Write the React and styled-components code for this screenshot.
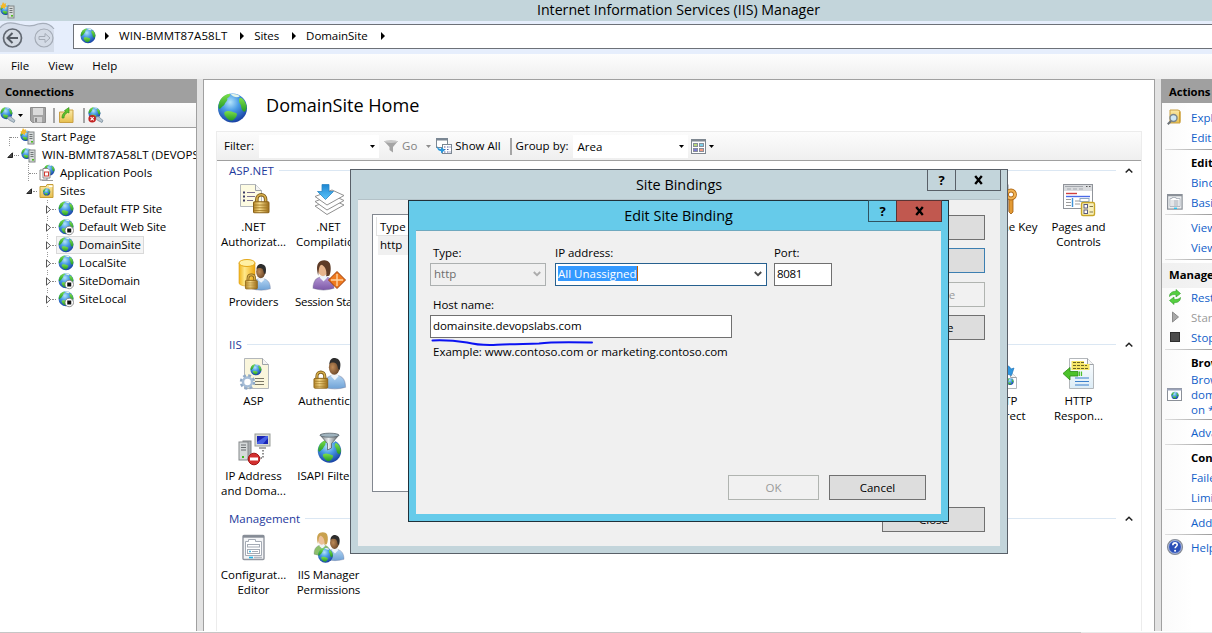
import React from "react";
import styled, { createGlobalStyle } from "styled-components";

const Global = createGlobalStyle`
  * { box-sizing: border-box; }
  html, body { margin: 0; padding: 0; overflow: hidden; }
  body {
    font-family: "Open Sans", "Noto Sans", sans-serif;
    font-size: 11.5px;
    line-height: 15px;
    color: #000;
    background: #fff;
  }
  svg { display: block; flex: none; overflow: visible; }
`;

/* ---------- icons ---------- */

const Svg = ({ w = 32, h = w, box = "0 0 32 32", children }) => (
  <svg width={w} height={h} viewBox={box} fill="none">{children}</svg>
);

const SharedGradients = () => (
  <defs>
    <radialGradient id="sea" cx="0.42" cy="0.3" r="0.75">
      <stop offset="0" stopColor="#b4e4fb" />
      <stop offset="0.4" stopColor="#4a9ce6" />
      <stop offset="1" stopColor="#12379c" />
    </radialGradient>
    <linearGradient id="land" x1="0" y1="0" x2="0" y2="1">
      <stop offset="0" stopColor="#7ee04a" />
      <stop offset="1" stopColor="#229a26" />
    </linearGradient>
    <linearGradient id="gold" x1="0" y1="0" x2="1" y2="0">
      <stop offset="0" stopColor="#b98a2a" />
      <stop offset="0.4" stopColor="#f7dc8c" />
      <stop offset="1" stopColor="#9a6a14" />
    </linearGradient>
    <linearGradient id="yellow" x1="0" y1="0" x2="1" y2="0">
      <stop offset="0" stopColor="#f0b41c" />
      <stop offset="0.35" stopColor="#ffe88a" />
      <stop offset="1" stopColor="#eea80c" />
    </linearGradient>
    <linearGradient id="folder" x1="0" y1="0" x2="0" y2="1">
      <stop offset="0" stopColor="#fbeaa8" />
      <stop offset="1" stopColor="#e6bf4e" />
    </linearGradient>
    <linearGradient id="steel" x1="0" y1="0" x2="1" y2="0">
      <stop offset="0" stopColor="#6e7478" />
      <stop offset="0.45" stopColor="#e8ecee" />
      <stop offset="1" stopColor="#4c5256" />
    </linearGradient>
    <linearGradient id="blueshirt" x1="0" y1="0" x2="0" y2="1">
      <stop offset="0" stopColor="#b4d6f4" />
      <stop offset="1" stopColor="#6fa2d6" />
    </linearGradient>
    <linearGradient id="sky" x1="0" y1="0" x2="0" y2="1">
      <stop offset="0" stopColor="#1d86d2" />
      <stop offset="1" stopColor="#5cc4fa" />
    </linearGradient>
    <linearGradient id="paper" x1="0" y1="0" x2="0" y2="1">
      <stop offset="0" stopColor="#fff" />
      <stop offset="1" stopColor="#dcecf6" />
    </linearGradient>
    <linearGradient id="purple" x1="0" y1="0" x2="0" y2="1">
      <stop offset="0" stopColor="#b79ad6" />
      <stop offset="1" stopColor="#7d58a8" />
    </linearGradient>
    <radialGradient id="darkface" cx="0.35" cy="0.5" r="0.7">
      <stop offset="0" stopColor="#bd8a58" />
      <stop offset="1" stopColor="#5e3d22" />
    </radialGradient>
  </defs>
);

const GlobeArt = ({ x = 0, y = 0, s = 1 }) => (
  <g transform={`translate(${x} ${y}) scale(${s})`}>
    <circle cx="16" cy="15.5" r="15" fill="url(#sea)" />
    <path d="M1.800 12C3 6 7 2 13 .9C14.500 2 13 4.500 10.500 5.500C11.500 8 8.500 9.500 7.500 12.500C5.500 13.500 4.500 16 2.600 16.500C1.400 15 1.400 13.500 1.800 12Z" fill="url(#land)" />
    <path d="M8 19.500C11 17.500 15 19 19 20.500C22.500 21 19.500 26.500 16.500 28C14 29.500 11 27.500 9 24.500C7.500 22.500 7 20.500 8 19.500Z" fill="url(#land)" />
    <path d="M24 5C27 5 30 10.500 30.600 14C30.600 17.500 29 20.500 27.500 19C24.500 17 25.500 13.500 24 11.500C22.500 9.500 22 6.500 24 5Z" fill="url(#land)" />
    <path d="M14 1.500C17 .3 21.500 1.300 23.500 3.300C21 5.500 17 4 14 1.500Z" fill="#e3f4e8" />
  </g>
);

const Globe = ({ size = 16 }) => <Svg w={size} box="0 0 32 32"><GlobeArt /></Svg>;

const StoppedGlobe = () => (
  <Svg w={16}>
    <GlobeArt />
    <circle cx="22.5" cy="23" r="8.5" fill="#fff" stroke="#777" strokeWidth="1.6" />
    <rect x="18.5" y="19" width="8" height="8" fill="#111" />
  </Svg>
);

const ServerArt = ({ x = 0, y = 0 }) => (
  <g transform={`translate(${x} ${y})`}>
    <rect x=".5" y=".5" width="6" height="12" fill="#d5d9d8" stroke="#84898a" />
    <path d="M2 3h3M2 5h3M2 7h3" stroke="#6f7576" />
    <rect x="3.5" y="9.5" width="2" height="1.6" fill="#4fbc1e" />
  </g>
);

const ServerGlobe = ({ star, defs }) => (
  <Svg w={16} box="0 0 16 16">
    {defs && <SharedGradients />}
    <GlobeArt s={0.36} x={0} y={1} />
    {star && <path d="M3 -1l1.200 1.800 2-.6-.6 2 1.600 1.200-2 .6-.2 2-1.800-1.200-2 .8.2-2L0 3l1.800-1Z" fill="#f5b82a" />}
    <ServerArt x={7.5} y={2.5} />
  </Svg>
);

const AppPoolsIcon = () => (
  <Svg w={16} box="0 0 16 16">
    <GlobeArt s={0.36} x={4.5} y={-0.5} />
    <path d="M1 5h7v10H1z" fill="#fff" stroke="#8a8a8a" />
    <path d="M4 3.500h5l2 2V13H4z" fill="#fff" stroke="#8a8a8a" />
    <rect x="5.500" y="7" width="4" height="4" fill="#fff" stroke="#d03a30" />
    <path d="M3 15.500h11" stroke="#9a9a9a" />
  </Svg>
);

const SitesFolder = () => (
  <Svg w={16} box="0 0 16 16">
    <path d="M1 3.500h6l1-2h6v13H1z" fill="url(#folder)" stroke="#c79d35" />
    <rect x="10" y="2.500" width="3.500" height="1.500" fill="#fff" />
    <GlobeArt s={0.24} x={3.8} y={5.2} />
  </Svg>
);

const ConnectIcon = ({ stop }) => (
  <Svg w={17} h={16} box="0 0 17 16">
    <GlobeArt s={0.4} />
    <path d="M7 11c1-1 3-2 4-1l4 3.500-1 2-4-2z" fill="#b8c6d0" stroke="#6e8494" strokeWidth=".7" />
    {stop && <circle cx="4.2" cy="11.8" r="3.8" fill="#c32020" />}
    {stop && <path d="M2.600 10.200l3.200 3.200M5.800 10.200l-3.200 3.200" stroke="#fff" strokeWidth="1.2" />}
  </Svg>
);

const SaveIcon = () => (
  <Svg w={16} box="0 0 16 16">
    <path d="M.5.5h15v15H2.500l-2-2z" fill="#a3a3a3" stroke="#8d8d8d" />
    <rect x="3" y="1" width="10" height="7" fill="#dadada" />
    <rect x="4" y="10" width="8" height="5.500" fill="#d0d0d0" />
    <rect x="5" y="11" width="2" height="4" fill="#8a8a8a" />
  </Svg>
);

const UpFolder = () => (
  <Svg w={15} h={16} box="0 0 15 16">
    <path d="M.5 5h7l1-2h5.500v12.500H.5z" fill="url(#folder)" stroke="#c9a044" />
    <path d="M3 11C3 8 4 6 6.500 5L5.500 3.500L10 .5V6L8.500 5.500C6.500 6.500 5 8.500 5 11Z" fill="#5cc42e" stroke="#2d8a14" strokeWidth=".6" />
  </Svg>
);

const Caret = ({ color = "#000" }) => (
  <Svg w={5} h={3} box="0 0 5 3"><path d="M0 0h5L2.500 3z" fill={color} /></Svg>
);

const CrumbArrow = () => (
  <Svg w={4} h={8} box="0 0 4 8"><path d="M0 0v8l4-4z" fill="#000" /></Svg>
);

const Chevron = () => (
  <Svg w={8} h={5} box="0 0 8 5"><path d="M.7 4.500L4 1.200l3.300 3.300" stroke="#222" strokeWidth="1.500" /></Svg>
);

const ComboArrow = ({ color }) => (
  <Svg w={8} h={6} box="0 0 8 6"><path d="M.8 1L4 4.200 7.200 1" stroke={color} strokeWidth="1.900" /></Svg>
);

const Funnel = () => (
  <Svg w={14} h={13} box="0 0 14 13">
    <path d="M0 1h14L9 7v5.500L5.500 10V7z" fill="#a4a4a4" />
    <ellipse cx="7" cy="1.500" rx="6.500" ry="1.500" fill="#c9c9c9" />
  </Svg>
);

const ShowAllIcon = () => (
  <Svg w={16} box="0 0 16 16">
    <rect x=".5" y=".5" width="11" height="9" fill="#fff" stroke="#7b8793" />
    <path d="M0 1.500h12" stroke="#7b8793" strokeWidth="2" />
    <rect x="6.500" y="6.500" width="9" height="9" fill="#fff" stroke="#7b8793" />
    <path d="M8 9h1.500M11 9h1.500M13.500 9h1M8 11.500h1.500M11 11.500h1.500M8 14h1.500M11 14h1.500M13.500 14h1" stroke="#555c9c" />
    <path d="M1 8c0 4 2 5 4 5v2.500l4-3.500-4-3V11c-2 0-3-1-4-3z" fill="#2b98dc" />
  </Svg>
);

const GridIcon = () => (
  <Svg w={15} box="0 0 15 15">
    <rect x=".5" y=".5" width="14" height="14" fill="#fff" stroke="#7f8790" />
    <path d="M0 1.500h15" stroke="#7f8790" strokeWidth="2" />
    <rect x="2.500" y="4.500" width="4" height="3" fill="#b8d878" stroke="#888e9a" />
    <rect x="8.500" y="4.500" width="4" height="3" fill="#7ed0e8" stroke="#888e9a" />
    <rect x="2.500" y="9.500" width="4" height="3" fill="#7c7ad4" stroke="#888e9a" />
    <rect x="8.500" y="9.500" width="4" height="3" fill="#f09a80" stroke="#888e9a" />
  </Svg>
);

const LockArt = ({ x, y, s = 1 }) => (
  <g transform={`translate(${x} ${y}) scale(${s})`}>
    <path d="M3.500 8V5.500C3.500-.3 11.500-.3 11.500 5.500V8" stroke="#7d5c1c" strokeWidth="3.200" />
    <path d="M3.500 8V5.500C3.500-.3 11.500-.3 11.500 5.500V8" stroke="#d8b04c" strokeWidth="1.500" />
    <rect x=".5" y="7.500" width="14" height="10" rx="1" fill="url(#gold)" stroke="#8c6318" />
    <path d="M1 10.500h13M1 13h13M1 15.500h13" stroke="#a37a26" strokeWidth=".8" />
  </g>
);

const PersonArt = ({ x, y, s = 1, hair = "#2d2d2d", shirt = "url(#blueshirt)", face = "url(#darkface)", long }) => (
  <g transform={`translate(${x} ${y}) scale(${s})`}>
    <path d="M0 27C0 19 4 16 10 15.500C16 16 20 19 20 27C14 29 6 29 0 27Z" fill={shirt} stroke="#6a6a8a" strokeOpacity=".35" />
    <path d="M7.500 14h5l1 3-3.500 3.500L6.500 17z" fill="#eef4fa" />
    <ellipse cx="9.500" cy="8.500" rx="5" ry="7" fill={face} />
    <path
      d={long ? "M5 15C4 11 3 6 5 3C7 -.5 14 -1 16 3C17.500 7 17 12 15.500 15L12.500 15.500C13.500 11 12 6.500 8.500 4.500C6.500 4.500 5.500 7 5 15Z" : "M5 6C5 1 8-.3 11 .2C15.500 1 16 6 14.500 11L13 10C12.500 7 12 5 10 4.500C8 4 6 4 5 6Z"}
      fill={hair}
    />
  </g>
);

const PageArt = ({ x, y, w, h, fill = "#fff" }) => (
  <g transform={`translate(${x} ${y})`}>
    <path d={`M.5.5h${w - 7}l6 6v${h - 7}H.5z`} fill={fill} stroke="#b3b7bb" />
    <path d={`M${w - 6.5}.5v6h6`} fill="#f4f4f4" stroke="#9fa3a8" />
  </g>
);

const art = {
  auth: (
    <>
      <PageArt x={2} y={0} w={22} h={23} fill="#fdfbe2" />
      <path d="M9 8.500h8M9 12.500h8M9 16.500h6" stroke="#7b6f8f" strokeWidth="1.200" />
      <path d="M5 8.500h2M5 12.500h2M5 16.500h2" stroke="#3b3c66" strokeWidth="2" />
      <LockArt x={15} y={9.5} s={1.1} />
    </>
  ),
  compile: (
    <>
      {[22, 17.5, 12.5].map((y) => (
        <path key={y} d={`M2 ${y}L19 ${y - 6.5}L31 ${y - 1}L14 ${y + 8.5}Z`} fill="#fff" stroke="#909090" />
      ))}
      <path d="M9 .5h7v7h4.500L12.500 15.500 4.500 7.500H9z" fill="url(#sky)" stroke="#2b86c4" strokeWidth=".8" />
    </>
  ),
  providers: (
    <>
      <PersonArt x={14} y={5} s={0.92} />
      <path d="M1 4v20c0 4 16 4 16 0V4z" fill="url(#yellow)" stroke="#dd9c10" strokeWidth=".6" />
      <ellipse cx="9" cy="4" rx="8" ry="3.500" fill="#fff0a4" stroke="#e3a718" />
      <LockArt x={7} y={15} s={0.85} />
    </>
  ),
  session: (
    <>
      <PersonArt x={0} y={1} s={1.05} long hair="#5e3b26" shirt="url(#purple)" face="#e6b48c" />
      <path d="M24 12.500L32.500 21 24 29.500 15.500 21z" fill="#ef7a1e" stroke="#9f3c08" />
      <path d="M24 15v12M18 21h12" stroke="#ffd4a4" strokeWidth="1.400" />
    </>
  ),
  asp: (
    <>
      <PageArt x={6} y={0} w={25} h={31} fill="#faf6dc" />
      <GlobeArt x={12} y={6} s={0.37} />
      <path d="M17 20.500h9M17 23.500h9M17 26.500h9" stroke="#7b7866" />
      <circle cx="9.500" cy="24" r="6" stroke="#8fa9c6" strokeWidth="3.500" strokeDasharray="2.600 2.100" />
      <circle cx="9.500" cy="24" r="4.500" fill="#fff" stroke="#a6bdd6" strokeWidth="2.500" />
    </>
  ),
  authentic: (
    <>
      <PersonArt x={11} y={0} s={1.08} />
      <LockArt x={0.5} y={13} s={0.98} />
    </>
  ),
  ipaddr: (
    <>
      <rect x="5" y="8" width="8" height="18" fill="#a9adb0" stroke="#7e8284" />
      <rect x="1" y="9" width="9" height="18" fill="#d6dadb" stroke="#85898b" />
      <path d="M3 12h5M3 14.500h5M3 17h5" stroke="#686d70" />
      <rect x="4" y="23" width="2" height="2" fill="#3fba20" />
      <rect x="17" y="1" width="15" height="12" fill="#d8dbd6" stroke="#989c98" />
      <rect x="19" y="3" width="11" height="8" fill="#1a24b4" />
      <path d="M19 9L28 3h2v2l-5 6h-6z" fill="#4660e4" />
      <path d="M21 15h7" stroke="#aaa" strokeWidth="2" />
      <path d="M25 17v8h-4" stroke="#222" strokeDasharray="1.500 1.500" />
      <circle cx="16" cy="26" r="5.800" fill="#d22f2f" stroke="#a31616" />
      <rect x="12" y="24.500" width="8" height="3" fill="#fff" />
    </>
  ),
  isapi: (
    <>
      <GlobeArt x={4} y={6} s={0.78} />
      <path d="M7 2L14.500 10.500v6.500l4-2V10.500L26 2z" fill="url(#steel)" stroke="#50585c" strokeWidth=".7" />
      <ellipse cx="16.500" cy="2.200" rx="9.500" ry="2" fill="#9fb3be" stroke="#59656c" strokeWidth=".8" />
    </>
  ),
  config: (
    <>
      <rect x="5" y="3.500" width="21" height="24" rx="1" fill="#f3f4f6" stroke="#9297a0" strokeWidth="1.400" />
      <path d="M5 4.500h21" stroke="#858b95" strokeWidth="2.400" />
      <path d="M7.500 9.500h3v-2h7v2h6v14h-16z" fill="#fff" stroke="#a5abb5" />
      <rect x="9.500" y="12.500" width="12" height="2.500" stroke="#a5abb5" />
      <rect x="9.500" y="17.500" width="12" height="4" stroke="#a5abb5" />
      <path d="M11 19.500h2" stroke="#3fb6e4" strokeWidth="1.600" />
      <path d="M14 19.500h6" stroke="#a5abb5" />
      <path d="M11 25.500h4" stroke="#22b4e8" strokeWidth="1.600" />
      <path d="M16 25.500h8" stroke="#b5bac2" strokeWidth="1.600" />
    </>
  ),
  perms: (
    <>
      <PersonArt x={1} y={0} s={0.82} long hair="#c9a14e" shirt="#8cbf6a" face="#ecc09a" />
      <PersonArt x={13} y={3} s={0.9} />
      <GlobeArt x={4.5} y={15.5} s={0.5} />
    </>
  ),
  key: (
    <>
      <rect x="8" y="1" width="12" height="26" fill="#a6a6a6" stroke="#8a8a8a" />
      <path d="M21 15h4v13l-2 2-2-2z" fill="#e39a34" stroke="#a05c10" strokeWidth=".8" />
      <circle cx="23" cy="10.500" r="4" stroke="#b06a18" strokeWidth="3.800" />
      <circle cx="23" cy="10.500" r="4" stroke="#f2b354" strokeWidth="2.200" />
    </>
  ),
  pages: (
    <>
      <rect x=".5" y=".5" width="29" height="24" fill="#fff" stroke="#90949a" />
      <rect x="1" y="1" width="28" height="6" fill="#d9dbde" />
      <path d="M2 2.500h18M4 5h4M10 5h4M16 5h4" stroke="#a3a7ad" />
      <path d="M23 2.500h1.500M26 2.500h1.500" stroke="#555" />
      <path d="M3 9.500h11" stroke="#d04040" strokeWidth="1.400" />
      <path d="M3 12.500h24" stroke="#4a6ae8" strokeWidth="1.400" />
      <path d="M9.500 14v9" stroke="#3f93d8" strokeWidth="1.400" />
      <path d="M3 15.500h5M3 18.500h5M3 21.500h5M12 17h5M12 20h5" stroke="#9c9c9c" />
      <rect x="17" y="14.500" width="9" height="3" stroke="#8fa8c0" />
      <rect x="18.500" y="18.500" width="13" height="13" rx="1.500" fill="#f8f0bc" stroke="#c8a62a" strokeWidth="1.400" />
      <rect x="21" y="20.500" width="3.500" height="3.500" fill="#fff" stroke="#5a5a80" />
      <rect x="21" y="26" width="3.500" height="3.500" fill="#fff" stroke="#5a5a80" />
      <path d="M26.500 22.500h3.500M26.500 28h3.500" stroke="#807850" />
    </>
  ),
  redirect: (
    <>
      <PageArt x={10} y={13} w={19} h={18} />
      <GlobeArt x={18.5} y={20} s={0.23} />
      <path d="M12 12c2-6 9-6 11-1l3-1-2.500 7.500L15.500 15l3-1.500c-1-3-4-4-6.500-1.500z" fill="#2f97e0" stroke="#1c6fb4" strokeWidth=".6" />
    </>
  ),
  response: (
    <>
      <PageArt x={6} y={0} w={25} h={31} fill="url(#paper)" />
      <path d="M8.500 3h12.500v3h5.500v6H8.500z" fill="#f6e566" />
      <path d="M10 4.500h11M10 7.500h14M10 10.500h15" stroke="#6b6526" strokeDasharray="3 1" />
      <path d="M0 15.500l7-6v4h8v4.500H7v4z" fill="#4cc22a" stroke="#2a8c12" strokeWidth=".8" />
      <path d="M16.500 13.500v4.500M18.500 13.500v4.500" stroke="#4cc22a" strokeWidth="1.200" />
      <path d="M12 20h14M12 23.500h14M12 27h14" stroke="#3b7fcb" strokeWidth="1.100" />
    </>
  ),
};

const actionArt = {
  explore: (
    <Svg w={16} box="0 0 16 16">
      <path d="M3 1h8l2 1v12H3z" fill="url(#folder)" stroke="#c9a044" />
      <path d="M12 2.500v11l1.500-1V3z" fill="#d0a030" />
      <circle cx="6.500" cy="9" r="3.500" fill="#cfe8f6" stroke="#7a868e" strokeWidth="1.400" />
      <path d="M4 12L.8 15.300" stroke="#6a7074" strokeWidth="2" />
    </Svg>
  ),
  basic: (
    <Svg w={16} box="0 0 16 16">
      <rect x=".6" y=".6" width="14.500" height="14.500" fill="#eceef0" stroke="#8b9098" strokeWidth="1.200" />
      <path d="M1 1.500h14" stroke="#8b9098" strokeWidth="1.500" />
      <path d="M3 4.500h2v-1h4v1h4v8H3z" fill="#fff" stroke="#a5abb5" strokeWidth=".8" />
      <path d="M6.500 7h5M6.500 9h5M6.500 11h5M4.500 7h1M4.500 9h1M4.500 11h1" stroke="#89909c" strokeWidth=".9" />
      <path d="M7 14.300h3" stroke="#22c0f0" strokeWidth="1.400" />
    </Svg>
  ),
  restart: (
    <Svg w={16} box="0 0 16 16">
      <path d="M2.500 7.500C2.500 3.500 6 2 9 2.500V.5l4.500 4L9 8V5.800C7 5.200 4.500 5.500 2.500 7.500z" fill="#55cf40" stroke="#2e9a22" strokeWidth=".6" />
      <path d="M13.500 8.500c0 4-3.500 5.500-6.500 5v2l-4.500-4L7 8v2.200c2 .6 4.500.3 6.500-1.700z" fill="#55cf40" stroke="#2e9a22" strokeWidth=".6" />
    </Svg>
  ),
  start: <Svg w={16} box="0 0 16 16"><path d="M5.500 3v10l6-5z" fill="#a8a8a8" stroke="#8a8a8a" /></Svg>,
  stop: <Svg w={16} box="0 0 16 16"><rect x="3.500" y="3.500" width="9" height="9" fill="#4c4c4c" stroke="#2e2e2e" /></Svg>,
  browse: (
    <Svg w={16} box="0 0 16 16">
      <rect x=".5" y="1.500" width="14" height="12" fill="#fff" stroke="#8b9098" />
      <path d="M0 2.500h15" stroke="#9aa2b8" strokeWidth="2" />
      <GlobeArt x={4.1} y={4.7} s={0.24} />
    </Svg>
  ),
  help: (
    <Svg w={16} box="0 0 16 16">
      <circle cx="8" cy="8" r="7.400" fill="#2b50b8" stroke="#8a8f98" strokeWidth="1.400" />
      <circle cx="8" cy="8" r="6.400" stroke="#dfe6f6" strokeWidth=".7" />
      <path d="M5.800 6.200C5.800 3 10.400 3.200 10.200 6C10 7.500 8.100 7.600 8.100 9.300" stroke="#fff" strokeWidth="1.600" />
      <circle cx="8.100" cy="11.700" r="1.050" fill="#fff" />
    </Svg>
  ),
};

const NavButtons = () => (
  <Svg w={60} h={33} box="0 0 60 33">
    <path d="M0 5C5 1 14 1 20 3.500C26 5.500 34 5 38 3C45 1 52 3 54 10V31H0z" fill="#cfd7e4" opacity=".75" />
    <path d="M0 7C4 1 12 1 20 3.500C26 5 34 5 38 3C46 1 51 4 54 8" stroke="#a5adba" strokeWidth="1.200" />
    <circle cx="12.500" cy="17" r="9" fill="#d4dae3" stroke="#626872" strokeWidth="1.700" />
    <path d="M18 17H8M12.500 12L7.500 17l5 5" stroke="#555b64" strokeWidth="2" />
    <circle cx="44" cy="17" r="9" fill="#d4dbe6" stroke="#a4abb6" strokeWidth="1.200" />
    <path d="M39 15.500h6v-3l5 4.500-5 4.500v-3h-6z" stroke="#a4abb6" />
  </Svg>
);

/* ---------- shell ---------- */

const Screen = styled.div`
  position: relative;
  width: 1212px;
  height: 633px;
  overflow: hidden;
  display: flex;
  flex-direction: column;
  white-space: nowrap;
`;

const TitleBar = styled.header`
  height: 21px;
  flex: none;
  display: flex;
  align-items: center;
  background: #c3d5db;
`;

const WindowTitle = styled.h1`
  margin: 0;
  padding: 0 0 2px 129px;
  flex: 1;
  text-align: center;
  font-size: 14.2px;
  font-weight: 400;
  line-height: 18px;
`;

const NavBar = styled.nav`
  height: 33px;
  flex: none;
  display: flex;
  align-items: flex-start;
  gap: 13px;
  background: #e6eefc;
`;

const AddressBar = styled.div`
  height: 25px;
  flex: 1;
  margin-top: 3px;
  margin-right: -2px;
  padding: 0 0 2px 6px;
  display: flex;
  align-items: center;
  background: #fff;
  border: 1px solid #6d7178;
`;

const Crumb = styled.span`
  margin: 0 13px 0 10px;
  letter-spacing: ${(p) => p.$track || 0}px;
`;

const MenuBar = styled.div`
  height: 25px;
  flex: none;
  display: flex;
  align-items: center;
  gap: 19px;
  padding: 0 0 2px 11px;
  background: linear-gradient(#fdfdfd, #efefef);
`;

const Body = styled.div`
  flex: 1;
  min-height: 0;
  display: flex;
`;

const Splitter = styled.div`
  width: 8px;
  flex: none;
  background: #e3e3e3;
  border: solid #a0a0a0;
  border-width: 0 1px;
`;

const PaneTitle = styled.h2`
  margin: 0;
  height: 24px;
  flex: none;
  padding-left: ${(p) => p.$indent}px;
  font-size: 11.3px;
  font-weight: 700;
  line-height: 25px;
  letter-spacing: -0.1px;
  background: #a0a0a0;
`;

/* ---------- connections ---------- */

const Connections = styled.aside`
  width: 196px;
  flex: none;
  overflow: hidden;
  display: flex;
  flex-direction: column;
  background: #fff;
`;

const ConnToolbar = styled.div`
  height: 25px;
  flex: none;
  display: flex;
  align-items: center;
  background: linear-gradient(#fdfdfd, #efefef);
  border-bottom: 1px solid #a0a0a0;
`;

const Divider = styled.i`
  width: 2px;
  height: ${(p) => p.$h || 15}px;
  margin: 0 ${(p) => p.$right}px 0 ${(p) => p.$left}px;
  background: #a5a5a5;
`;

const Shift = styled.span`
  margin-left: ${(p) => p.$by}px;
`;

const Raised = styled.span`
  margin: -1px 0 1px ${(p) => p.$left || 0}px;
`;

const TreeRow = styled.div`
  height: 18px;
  flex: none;
  display: flex;
  align-items: center;
  padding-left: ${(p) => p.$indent}px;
  ${(p) =>
    p.$guide &&
    `background: repeating-linear-gradient(#9a9a9a 0 1px, #fff 1px 2px) ${p.$guide}px bottom / 1px ${p.$guide < 10 ? "50%" : "100%"} no-repeat;`}
`;

const TreeToggle = styled.span`
  width: 8px;
  height: 13px;
  flex: none;
  display: flex;
  align-items: center;
  justify-content: center;
  background: #fff;
`;

const TreeLine = styled.span`
  width: ${(p) => p.$w}px;
  flex: none;
  height: 0;
  border-top: 1px dotted #8a8a8a;
`;

const TreeItem = styled.span`
  height: 18px;
  flex: none;
  display: flex;
  align-items: center;
  gap: 5px;
  padding: 0 2px 0 1px;
  letter-spacing: ${(p) => p.$track || 0}px;
  border: 1px solid ${(p) => (p.$selected ? "#d9d9d9" : "transparent")};
  background: ${(p) => (p.$selected ? "#f4f4f4" : "none")};
`;

const Toggle = ({ open }) => (
  <TreeToggle>
    {open ? (
      <Svg w={6} box="0 0 6 6"><path d="M5.500.8v4.700H.8z" fill="#4a4a4a" stroke="#222" /></Svg>
    ) : (
      <Svg w={5} h={9} box="0 0 5 9"><path d="M.5.8v7.400l4-3.700z" fill="#fff" stroke="#444" strokeWidth=".9" /></Svg>
    )}
  </TreeToggle>
);

const tree = [
  { label: "Start Page", indent: 10, line: 8, guide: 9, icon: <ServerGlobe star /> },
  { label: "WIN-BMMT87A58LT (DEVOPSL", indent: 6, toggle: "open", line: 5, icon: <ServerGlobe /> },
  { label: "Application Pools", indent: 29, line: 8, guide: 28, icon: <AppPoolsIcon /> },
  { label: "Sites", indent: 25, toggle: "open", line: 4, icon: <SitesFolder /> },
  { label: "Default FTP Site", icon: <Globe />, track: -0.05 },
  { label: "Default Web Site", icon: <StoppedGlobe />, track: -0.12 },
  { label: "DomainSite", icon: <Globe />, selected: true },
  { label: "LocalSite", icon: <Globe /> },
  { label: "SiteDomain", icon: <StoppedGlobe />, track: -0.1 },
  { label: "SiteLocal", icon: <StoppedGlobe /> },
].map((n) => (n.indent ? n : { indent: 44, toggle: "closed", line: 4, guide: 47, ...n }));

/* ---------- feature view ---------- */

const Main = styled.main`
  flex: 1;
  min-width: 0;
  padding: 12px 12px 0 12px;
  border-top: 1px solid #a0a0a0;
  display: flex;
  flex-direction: column;
  background: #fff;
`;

const Heading = styled.div`
  height: 39px;
  flex: none;
  display: flex;
  align-items: flex-start;
  gap: 18px;
  padding: 1px 0 0 1px;
  font-size: 18.1px;
  line-height: 24px;
`;

const FeatureBox = styled.section`
  flex: 1;
  border: solid #ececec;
  border-width: 1px 1px 0;
`;

const FilterBar = styled.div`
  height: 29px;
  display: flex;
  align-items: center;
  padding-left: 7px;
  background: linear-gradient(#fcfcfc, #efefef);
  border-bottom: 1px solid #a0a0a0;
`;

const Dropdown = styled.span`
  width: ${(p) => p.$w}px;
  height: 23px;
  margin-left: ${(p) => p.$left}px;
  padding: 0 4px 0 4px;
  display: flex;
  align-items: center;
  justify-content: space-between;
  background: #fff;
`;

const Muted = styled(Raised)`
  color: #838383;
  margin-right: 9px;
`;

const Group = styled.section`
  height: 174px;
`;

const GroupHead = styled.h3`
  height: 20px;
  margin: 0;
  padding: 0 8px 2px 12px;
  display: flex;
  align-items: center;
  gap: 5px;
  font-size: 11.5px;
  font-weight: 400;
  color: #1e3a9c;
`;

const Rule = styled.i`
  flex: 1;
  height: 1px;
  margin-right: 4px;
  background: #dbe7f3;
`;

const FeatureGrid = styled.div`
  margin-left: -1px;
  padding-top: 3px;
  display: grid;
  grid-template-columns: repeat(12, 75px);
  grid-auto-rows: 75px;
`;

const Feature = styled.div`
  grid-column: ${(p) => p.$col};
  grid-row: ${(p) => p.$row};
  display: flex;
  flex-direction: column;
  align-items: center;
  text-align: center;
  gap: 3px;
  white-space: pre;
  letter-spacing: ${(p) => p.$track || 0}px;
`;

const groups = [
  {
    name: "ASP.NET",
    items: [
      [1, 1, "auth", ".NET\nAuthorizat..."],
      [2, 1, "compile", ".NET\nCompilation"],
      [11, 1, "key", "Machine Key"],
      [12, 1, "pages", "Pages and\nControls", -0.1],
      [1, 2, "providers", "Providers", -0.15],
      [2, 2, "session", "Session State", -0.3],
    ],
  },
  {
    name: "IIS",
    items: [
      [1, 1, "asp", "ASP"],
      [2, 1, "authentic", "Authentic..."],
      [11, 1, "redirect", "HTTP\nRedirect"],
      [12, 1, "response", "HTTP\nRespon..."],
      [1, 2, "ipaddr", "IP Address\nand Doma..."],
      [2, 2, "isapi", "ISAPI Filters"],
    ],
  },
  {
    name: "Management",
    items: [
      [1, 1, "config", "Configurat...\nEditor"],
      [2, 1, "perms", "IIS Manager\nPermissions", -0.15],
    ],
  },
];

/* ---------- actions ---------- */

const Actions = styled.aside`
  width: 50px;
  flex: none;
  overflow: hidden;
  display: flex;
  flex-direction: column;
  background: linear-gradient(90deg, #fafafa, #fff 30px);
`;

const ActionList = styled.div`
  padding-top: 5px;
  display: flex;
  flex-direction: column;
`;

const ActionRow = styled.div`
  min-height: 20px;
  display: flex;
  align-items: center;
  padding-left: 5px;
  gap: 8px;
  white-space: pre;
  color: ${(p) => (p.$off ? "#9a9a9a" : "#1160c9")};
`;

const ActionIcon = styled.span`
  width: 16px;
  flex: none;
  margin: -1px 0 1px;
`;

const ActionHead = styled.div`
  height: ${(p) => (p.$band ? 25 : 20)}px;
  padding: 0 0 2px ${(p) => (p.$band ? 7 : 29)}px;
  display: flex;
  align-items: center;
  font-size: 11.3px;
  font-weight: 700;
  background: ${(p) => (p.$band ? "linear-gradient(90deg, #f0f0f0, #f3f3f3)" : "none")};
`;

const ActionRule = styled.i`
  height: 1px;
  margin: 1px 0 3px 3px;
  background: linear-gradient(90deg, #e0e0e0, #9c9c9c);
`;

const actions = [
  { icon: "explore", text: "Explore" },
  { text: "Edit Permissions..." },
  "rule",
  { head: "Edit Site" },
  { text: "Bindings..." },
  { icon: "basic", text: "Basic Settings..." },
  "rule",
  { text: "View Applications" },
  { text: "View Virtual Directories" },
  "rule",
  { head: "Manage Website", band: true },
  { icon: "restart", text: "Restart" },
  { icon: "start", text: "Start", off: true },
  { icon: "stop", text: "Stop" },
  "rule",
  { head: "Browse Website" },
  { icon: "browse", text: "Browse\ndomainsite.devopslabs.com\non *:8081 (http)" },
  "rule",
  { text: "Advanced Settings..." },
  "rule",
  { head: "Configure" },
  { text: "Failed Request Tracing..." },
  { text: "Limits..." },
  "rule",
  { text: "Add FTP Publishing..." },
  "rule",
  { icon: "help", text: "Help" },
];

const BottomEdge = styled.div`
  height: 2px;
  flex: none;
  border-top: 1px solid #fff;
  background: linear-gradient(90deg, #c6c6c6 1081px, #e9e9e9 1081px);
`;

/* ---------- dialogs ---------- */

const Dialog = styled.div`
  position: absolute;
  left: ${(p) => p.$x}px;
  top: ${(p) => p.$y}px;
  width: ${(p) => p.$w}px;
  height: ${(p) => p.$h}px;
  padding: 0 7px 7px;
  display: flex;
  flex-direction: column;
  background: ${(p) => p.$tint};
  border: 1px solid ${(p) => p.$line};
`;

const DialogBar = styled.div`
  position: relative;
  height: 29px;
  flex: none;
  text-align: center;
  font-size: 14.4px;
  line-height: 29px;
  letter-spacing: ${(p) => p.$track || 0}px;
`;

const Controls = styled.div`
  position: absolute;
  right: -1px;
  top: -1px;
  display: flex;
`;

const Control = styled.button`
  width: ${(p) => (p.$wide ? 46 : 29)}px;
  height: 22px;
  padding: 0;
  margin-right: ${(p) => (p.$wide ? 0 : -1)}px;
  display: flex;
  align-items: center;
  justify-content: center;
  font: 700 13px "Open Sans", sans-serif;
  color: #000;
  border: 1px solid ${(p) => p.$line};
  background: ${(p) => p.$fill || "transparent"};
`;

const CloseX = () => (
  <Svg w={9} h={8} box="0 0 9 8"><path d="M1.200 0L7.800 8M7.800 0L1.200 8" stroke="#000" strokeWidth="2.300" /></Svg>
);

const DialogBody = styled.div`
  flex: 1;
  min-height: 0;
  display: flex;
  padding: 14px 15px 14px 14px;
  background: #f0f0f0;
  border-top: 1px solid ${(p) => p.$line};
`;

const BindingsBody = styled(DialogBody)`
  justify-content: space-between;
`;

const BindingList = styled.div`
  width: 494px;
  height: 278px;
  padding: 2px 3px;
  background: #fff;
  border: 1px solid #82878f;
`;

const ListHead = styled.div`
  height: 19px;
  padding-left: 3px;
  line-height: 20px;
  border: solid #e2e2e2;
  border-width: 0 1px 1px;
`;

const ListRow = styled.div`
  height: 19px;
  margin: 0 0 0 2px;
  padding-left: 2px;
  line-height: 18px;
  background: #f0f0f0;
`;

const ButtonColumn = styled.div`
  display: flex;
  flex-direction: column;
`;

const Button = styled.button`
  width: ${(p) => p.$w}px;
  height: 25px;
  margin: ${(p) => p.$top || 0}px 0 0;
  padding: 0 0 1px;
  font: inherit;
  color: ${(p) => (p.$off ? "#9a9a9a" : "#000")};
  background: ${(p) => (p.$off ? "#f1f1f1" : "#dddddd")};
  border: 1px solid ${(p) => (p.$off ? "#b0b4b0" : p.$focus ? "#3c7fb1" : "#707070")};
`;

const EditBody = styled(DialogBody)`
  position: relative;
  flex-direction: column;
`;

const FieldRow = styled.div`
  display: flex;
  gap: 7px;
`;

const Field = styled.label`
  display: flex;
  flex-direction: column;
  gap: 3px;
  margin-top: ${(p) => p.$top || 0}px;
  margin-left: ${(p) => p.$left || 0}px;
`;

const FieldName = styled.span`
  padding-left: ${(p) => p.$pad}px;
  letter-spacing: -0.05px;
`;

const FieldBox = styled.span`
  width: ${(p) => p.$w}px;
  height: 23px;
  padding: 0 ${(p) => (p.$combo ? 4 : 2)}px 2px ${(p) => (p.$combo === "off" ? 3 : 2)}px;
  display: flex;
  align-items: center;
  justify-content: space-between;
  color: ${(p) => (p.$combo === "off" ? "#6d6d6d" : "#000")};
  letter-spacing: ${(p) => p.$track || 0}px;
  background: ${(p) => (p.$combo === "off" ? "#f0f0f0" : "#fff")};
  border: 1px solid ${(p) => p.$line || "#707070"};
`;

const Selected = styled.mark`
  color: #fff;
  background: #3399ff;
  border-right: 1px solid #c05a00;
`;

const Hint = styled.div`
  margin-top: 6px;
  padding-left: 3px;
`;

const Underline = styled.svg`
  position: absolute;
  left: 15px;
  top: 106px;
`;

const Footer = styled.div`
  margin-top: auto;
  display: flex;
  justify-content: flex-end;
  gap: 10px;
`;

export default function App() {
  return (
    <Screen>
      <Global />
      <TitleBar>
        <ServerGlobe star defs />
        <WindowTitle>Internet Information Services (IIS) Manager</WindowTitle>
      </TitleBar>
      <NavBar>
        <NavButtons />
        <AddressBar>
          <Globe />
          <Shift $by={9}><CrumbArrow /></Shift>
          <Crumb $track={0.12}>WIN-BMMT87A58LT</Crumb>
          <CrumbArrow />
          <Crumb $track={-0.1}>Sites</Crumb>
          <CrumbArrow />
          <Crumb $track={-0.05}>DomainSite</Crumb>
          <CrumbArrow />
        </AddressBar>
      </NavBar>
      <MenuBar><span>File</span><span>View</span><span>Help</span></MenuBar>

      <Body>
        <Connections>
          <PaneTitle $indent={5}>Connections</PaneTitle>
          <ConnToolbar>
            <ConnectIcon />
            <Shift $by={1}><Caret /></Shift>
            <Shift $by={7}><SaveIcon /></Shift>
            <Divider $left={7} $right={4} />
            <UpFolder />
            <Divider $left={9} $right={3} />
            <ConnectIcon stop />
          </ConnToolbar>
          {tree.map((n) => (
            <TreeRow key={n.label} $indent={n.indent} $guide={n.guide}>
              {n.toggle && <Toggle open={n.toggle === "open"} />}
              <TreeLine $w={n.line} />
              <TreeItem $selected={n.selected} $track={n.track}>{n.icon}<Raised>{n.label}</Raised></TreeItem>
            </TreeRow>
          ))}
        </Connections>
        <Splitter />

        <Main>
          <Heading><Globe size={31} />DomainSite Home</Heading>
          <FeatureBox>
            <FilterBar>
              <Raised>Filter:</Raised>
              <Dropdown $w={120} $left={5}><span /><Caret /></Dropdown>
              <Shift $by={5}><Funnel /></Shift>
              <Muted $left={4}>Go</Muted>
              <Caret color="#8d8d8d" />
              <Shift $by={5}><ShowAllIcon /></Shift>
              <Raised $left={3}>Show All</Raised>
              <Divider $h={17} $left={9} $right={4} />
              <Raised>Group by:</Raised>
              <Dropdown $w={115} $left={5}><span>Area</span><Caret /></Dropdown>
              <Shift $by={3}><GridIcon /></Shift>
              <Shift $by={3}><Caret /></Shift>
            </FilterBar>
            {groups.map((g) => (
              <Group key={g.name}>
                <GroupHead>{g.name}<Rule /><Chevron /></GroupHead>
                <FeatureGrid>
                  {g.items.map(([col, row, icon, label, track]) => (
                    <Feature key={label} $col={col} $row={row} $track={track}><Svg>{art[icon]}</Svg>{label}</Feature>
                  ))}
                </FeatureGrid>
              </Group>
            ))}
          </FeatureBox>
        </Main>
        <Splitter />

        <Actions>
          <PaneTitle $indent={7}>Actions</PaneTitle>
          <ActionList>
            {actions.map((a, i) => {
              if (a === "rule") return <ActionRule key={i} />;
              if (a.head) return <ActionHead key={i} $band={a.band}>{a.head}</ActionHead>;
              return (
                <ActionRow key={i} $off={a.off}>
                  <ActionIcon>{a.icon && actionArt[a.icon]}</ActionIcon>
                  <Raised>{a.text}</Raised>
                </ActionRow>
              );
            })}
          </ActionList>
        </Actions>
      </Body>
      <BottomEdge />

      <Dialog $x={350} $y={169} $w={658} $h={385} $tint="#c3d5db" $line="#596068">
        <DialogBar>
          Site Bindings
          <Controls>
            <Control $line="#596068">?</Control>
            <Control $line="#596068" $wide><CloseX /></Control>
          </Controls>
        </DialogBar>
        <BindingsBody $line="#b4c2c8">
          <BindingList>
            <ListHead>Type</ListHead>
            <ListRow>http</ListRow>
          </BindingList>
          <ButtonColumn>
            <Button $w={103} $top={1}>Add...</Button>
            <Button $w={103} $top={8} $focus>Edit...</Button>
            <Button $w={103} $top={9} $off>Remove</Button>
            <Button $w={103} $top={8}>Browse</Button>
            <Button $w={103} $top={167}>Close</Button>
          </ButtonColumn>
        </BindingsBody>
      </Dialog>

      <Dialog $x={408} $y={200} $w={541} $h={322} $tint="#66cbea" $line="#20313a">
        <DialogBar>
          Edit Site Binding
          <Controls>
            <Control $line="#2f5361">?</Control>
            <Control $line="#5a3434" $fill="#c1584f" $wide><CloseX /></Control>
          </Controls>
        </DialogBar>
        <EditBody $line="#6fa9bf">
          <FieldRow>
            <Field>
              <FieldName $pad={3}>Type:</FieldName>
              <FieldBox $w={116} $combo="off" $line="#acb0b0">http<ComboArrow color="#acacac" /></FieldBox>
            </Field>
            <Field $left={2}>
              <FieldName $pad={0}>IP address:</FieldName>
              <FieldBox $w={212} $combo="on" $line="#26608f"><Selected>All Unassigned</Selected><ComboArrow color="#4a4a4a" /></FieldBox>
            </Field>
            <Field>
              <FieldName $pad={0}>Port:</FieldName>
              <FieldBox $w={58} $track={-0.3}>8081</FieldBox>
            </Field>
          </FieldRow>
          <Field $top={11}>
            <FieldName $pad={3}>Host name:</FieldName>
            <FieldBox $w={302} $track={-0.04}>domainsite.devopslabs.com</FieldBox>
          </Field>
          <Hint>Example: www.contoso.com or marketing.contoso.com</Hint>
          <Underline width="163" height="10" viewBox="0 0 163 10" fill="none">
            <path d="M1.500 3.500C12 3 26 4 36 5.500C44 7.500 52 8.500 66 7.800C82 7 96 7 108 6.500C122 4.500 140 5 161 5.500" stroke="#0b12f2" strokeWidth="2" strokeLinecap="round" />
          </Underline>
          <Footer>
            <Button $w={91} $off>OK</Button>
            <Button $w={97}>Cancel</Button>
          </Footer>
        </EditBody>
      </Dialog>
    </Screen>
  );
}
